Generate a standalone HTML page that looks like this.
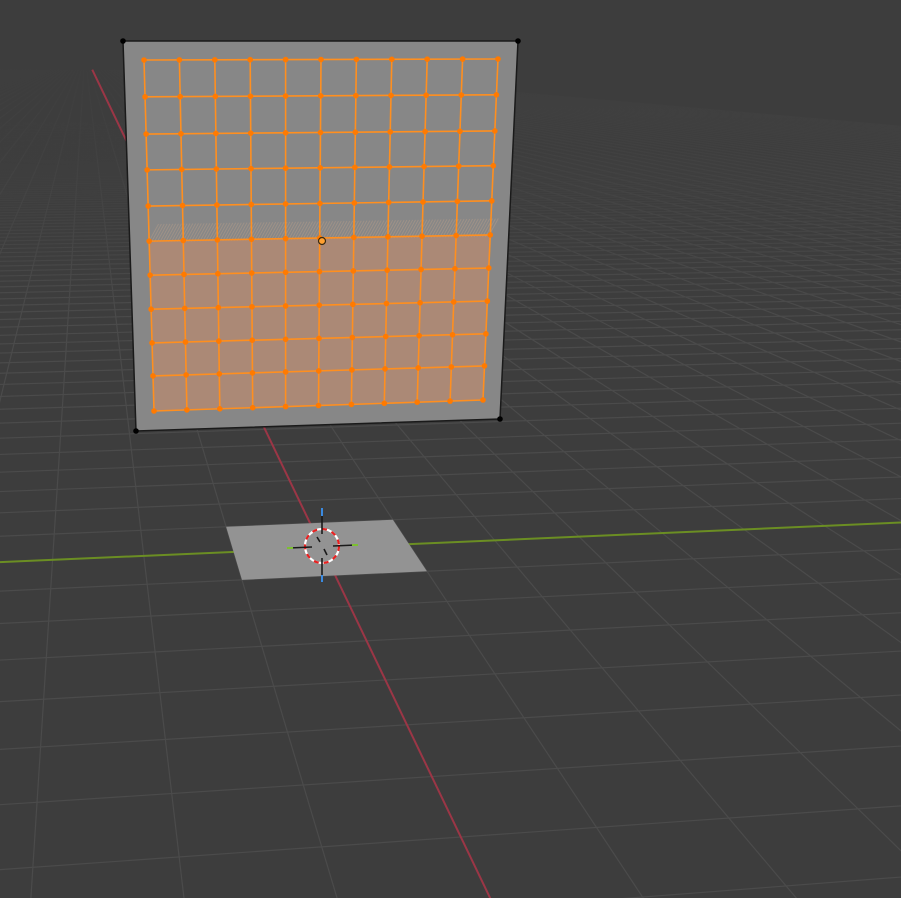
<!DOCTYPE html>
<html><head><meta charset="utf-8">
<style>html,body{margin:0;padding:0;background:#3d3d3d;overflow:hidden;width:901px;height:898px}svg{display:block;position:absolute;left:0;top:0}</style>
</head><body>
<svg id="s" width="901" height="898" viewBox="0 0 901 898" xmlns="http://www.w3.org/2000/svg">
<defs>
<linearGradient id="fade" x1="0" y1="0" x2="0" y2="1">
<stop offset="0" stop-color="#3d3d3d" stop-opacity="1"/>
<stop offset="0.17" stop-color="#3d3d3d" stop-opacity="1"/>
<stop offset="0.45" stop-color="#3d3d3d" stop-opacity="0.7"/>
<stop offset="0.75" stop-color="#3d3d3d" stop-opacity="0.3"/>
<stop offset="1" stop-color="#3d3d3d" stop-opacity="0"/>
</linearGradient>
</defs>
<rect width="901" height="898" fill="#3d3d3d"/>
<g id="grid" stroke="#4b4b4b" stroke-width="1.2" fill="none"></g>
<rect x="0" y="0" width="901" height="330" fill="url(#fade)"/>
<g id="axes" fill="none"></g>
<g id="wall"></g>
<g id="gizmo"></g>
</svg>
<script>
var NS="http://www.w3.org/2000/svg";
function el(t,a,p){var e=document.createElementNS(NS,t);for(var k in a)e.setAttribute(k,a[k]);p.appendChild(e);return e;}
var kx=-0.05277,ky=0.00783;
function P(x,y){var d=1+kx*x+ky*y;return [(322+85*kx*x+11522*ky*y)/d,(548+54.6*kx*x+54.6*ky*y)/d];}
var g=document.getElementById('grid');
for(var y=-50;y<=60;y++){if(y==0)continue;var a=P(-600,y),b=P(9,y);el('line',{x1:a[0],y1:a[1],x2:b[0],y2:b[1]},g);}
for(var x=-120;x<=9;x++){if(x==0)continue;var op=x<-20?Math.max(0.15,1-(-x-20)/60):1;var a=P(x,-50),b=P(x,60);el('line',{x1:a[0],y1:a[1],x2:b[0],y2:b[1],'stroke-opacity':op},g);}
var ax=document.getElementById('axes');
var a=P(-600,0),b=P(9,0);el('line',{x1:a[0],y1:a[1],x2:b[0],y2:b[1],stroke:'#9b3646','stroke-width':2},ax);
a=P(0,-50);b=P(0,60);el('line',{x1:a[0],y1:a[1],x2:b[0],y2:b[1],stroke:'#6b8e23','stroke-width':2},ax);
var w=document.getElementById('wall');
el('polygon',{points:"123,41 518,41 500,419 136,431",fill:"#878787",stroke:"#1a1a1a","stroke-width":1.5},w);
var TL=[144,60],TR=[498,59],BL=[154,411],BR=[483,400];
var rows=[0,0.105,0.211,0.313,0.416,0.516,0.613,0.71,0.806,0.9,1];
function Q(u,v){var tx=TL[0]+(TR[0]-TL[0])*u,ty=TL[1]+(TR[1]-TL[1])*u,bx=BL[0]+(BR[0]-BL[0])*u,by=BL[1]+(BR[1]-BL[1])*u;return [tx+(bx-tx)*v,ty+(by-ty)*v];}
var p1=Q(0,rows[5]),p2=Q(1,rows[5]),p3=Q(1,1),p4=Q(0,1);
el('polygon',{points:p1+" "+p2+" "+p3+" "+p4,fill:"#ff9050","fill-opacity":0.3},w);
var hb=el('g',{stroke:"#c9a58a","stroke-width":1,"stroke-opacity":0.35},w);
for(var i=0;i<120;i++){var u=i/120;var q=Q(u,rows[5]-0.06);el('line',{x1:q[0],y1:q[1]+22,x2:q[0]+10,y2:q[1]+4},hb);}
var lg=el('g',{stroke:"#ff8f1f","stroke-width":1.6,fill:"none"},w);
for(var r=0;r<11;r++){var a=Q(0,rows[r]),b=Q(1,rows[r]);el('line',{x1:a[0],y1:a[1],x2:b[0],y2:b[1]},lg);}
for(var c=0;c<11;c++){var a=Q(c/10,0),b=Q(c/10,1);el('line',{x1:a[0],y1:a[1],x2:b[0],y2:b[1]},lg);}
var dg=el('g',{fill:"#ff7a00"},w);
for(var r=0;r<11;r++)for(var c=0;c<11;c++){var q=Q(c/10,rows[r]);el('circle',{cx:q[0],cy:q[1],r:2.8},dg);}
el('circle',{cx:322,cy:241,r:3.5,fill:"#ffa030",stroke:"#3a2a10","stroke-width":1.2},w);
[[123,41],[518,41],[500,419],[136,431]].forEach(function(p){el('circle',{cx:p[0],cy:p[1],r:2.8,fill:"#000"},w);});
var gz=document.getElementById('gizmo');
var c1=P(-1,-1),c2=P(-1,1),c3=P(1,1),c4=P(1,-1);
el('polygon',{points:c1+" "+c2+" "+c3+" "+c4,fill:"#939393"},gz);
el('circle',{cx:322,cy:546,r:17,fill:"none",stroke:"#ffffff","stroke-width":2.2},gz);
el('circle',{cx:322,cy:546,r:17,fill:"none",stroke:"#e82020","stroke-width":2.2,"stroke-dasharray":"5 5"},gz);
var lc=el('g',{stroke:"#1a1a1a","stroke-width":1.6},gz);
el('line',{x1:322,y1:512,x2:322,y2:534},lc);el('line',{x1:322,y1:558,x2:322,y2:580},lc);
el('line',{x1:289,y1:548,x2:312,y2:547},lc);el('line',{x1:333,y1:546,x2:356,y2:545},lc);
el('line',{x1:317,y1:537,x2:320,y2:542},lc);el('line',{x1:324,y1:549,x2:327,y2:555},lc);
el('line',{x1:322,y1:508,x2:322,y2:516,stroke:"#3a8ae0","stroke-width":2},gz);
el('line',{x1:322,y1:575,x2:322,y2:582,stroke:"#3a8ae0","stroke-width":2},gz);
el('line',{x1:287,y1:548,x2:293,y2:548,stroke:"#7cc030","stroke-width":2},gz);
el('line',{x1:352,y1:545,x2:358,y2:545,stroke:"#7cc030","stroke-width":2},gz);
</script>
</body></html>
